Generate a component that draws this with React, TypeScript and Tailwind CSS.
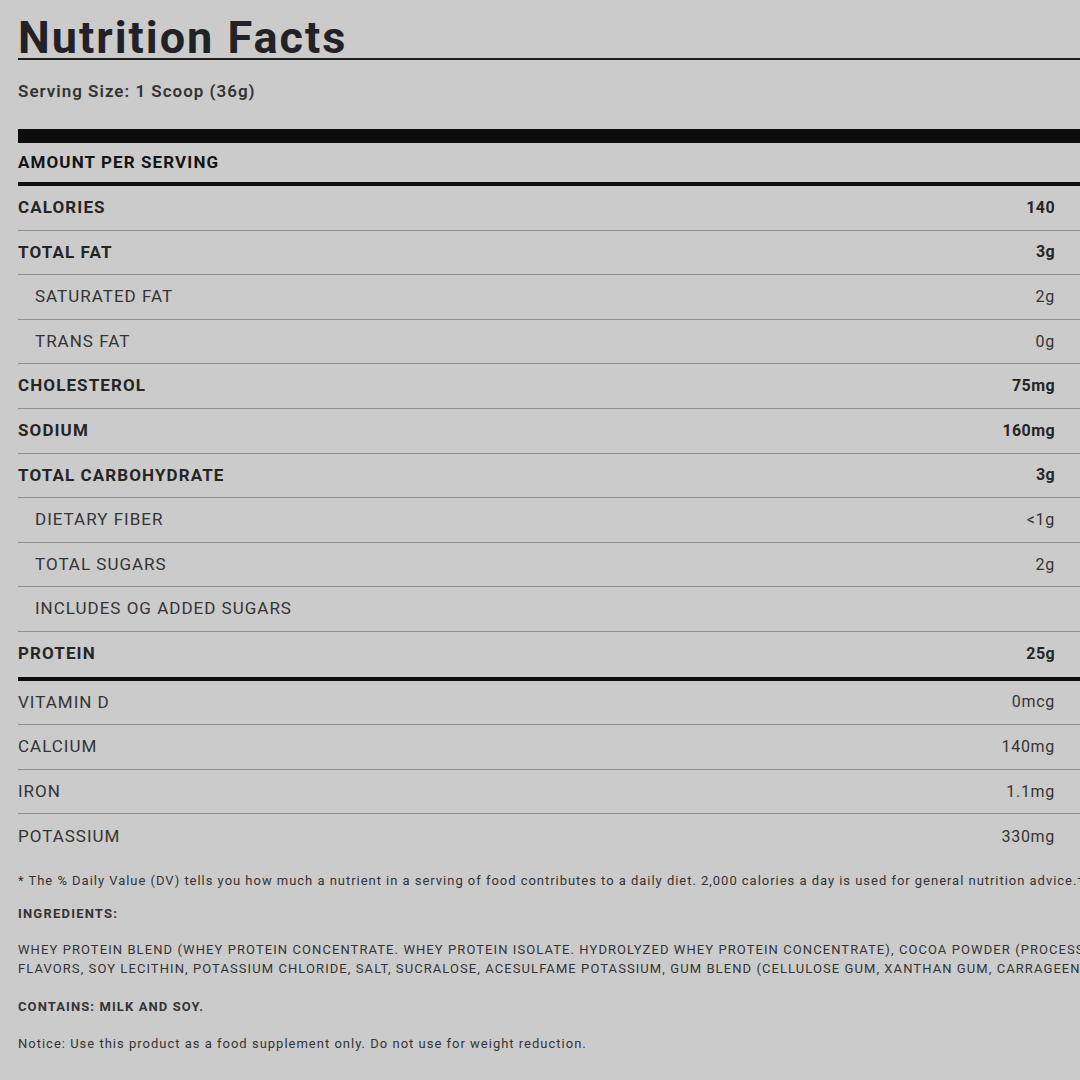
import React from "react";

type Row = { label: string; value: string; bold?: boolean; indent?: boolean };

const mainRows: Row[] = [
  { label: "CALORIES", value: "140", bold: true },
  { label: "TOTAL FAT", value: "3g", bold: true },
  { label: "SATURATED FAT", value: "2g", indent: true },
  { label: "TRANS FAT", value: "0g", indent: true },
  { label: "CHOLESTEROL", value: "75mg", bold: true },
  { label: "SODIUM", value: "160mg", bold: true },
  { label: "TOTAL CARBOHYDRATE", value: "3g", bold: true },
  { label: "DIETARY FIBER", value: "<1g", indent: true },
  { label: "TOTAL SUGARS", value: "2g", indent: true },
  { label: "INCLUDES OG ADDED SUGARS", value: "", indent: true },
  { label: "PROTEIN", value: "25g", bold: true },
];

const vitRows: Row[] = [
  { label: "VITAMIN D", value: "0mcg" },
  { label: "CALCIUM", value: "140mg" },
  { label: "IRON", value: "1.1mg" },
  { label: "POTASSIUM", value: "330mg" },
];

function NRow({ row, last }: { row: Row; last: boolean }) {
  return (
    <div
      className={
        "flex h-[44.6px] items-center justify-between pr-[25px] " +
        (last ? "" : "border-b border-[#8c9196] ")
      }
    >
      <span
        className={
          "text-[17px] " +
          (row.indent ? "pl-[17px] " : "") +
          (row.bold
            ? "font-bold text-[#252525] tracking-[1.1px]"
            : "font-normal text-[#343434] tracking-[1px]")
        }
      >
        {row.label}
      </span>
      <span
        className={
          "text-[16px] " +
          (row.bold
            ? "font-bold text-[#252525] tracking-[0.4px]"
            : "font-normal text-[#343434] tracking-[0.7px]")
        }
      >
        {row.value}
      </span>
    </div>
  );
}

export default function App() {
  return (
    <div
      className="w-[1080px] h-[1080px] overflow-hidden bg-[#cbcbcb] pl-[18px]"
      style={{ fontFamily: "Roboto, 'Liberation Sans', sans-serif" }}
    >
      <div className="w-[1062px]">
        <div className="h-[58px] pt-[17px]">
          <h1 className="text-[45px] leading-[42px] font-bold text-[#222226] tracking-[2px]">
            Nutrition Facts
          </h1>
        </div>
        <div className="h-[1.5px] bg-[#1e1e1e]" />
        <div className="flex h-[64px] items-center text-[17px] font-semibold text-[#333333] tracking-[1px]">
          Serving Size: 1 Scoop (36g)
        </div>
        <div className="mt-[5.5px] h-[14px] bg-[#0d0d0d]" />
        <div className="flex h-[39px] items-center text-[17px] font-bold text-[#141414] tracking-[1.1px]">
          AMOUNT PER SERVING
        </div>
        <div className="h-[4px] bg-[#0d0d0d]" />
        <div>
          {mainRows.map((r, i) => (
            <NRow key={r.label} row={r} last={i === mainRows.length - 1} />
          ))}
        </div>
        <div className="h-[4px] bg-[#0d0d0d]" />
        <div>
          {vitRows.map((r, i) => (
            <NRow key={r.label} row={r} last={i === vitRows.length - 1} />
          ))}
        </div>
        <div className="flex h-[44px] items-center whitespace-nowrap text-[13px] text-[#333333] tracking-[0.97px]">
          * The % Daily Value (DV) tells you how much a nutrient in a serving of food contributes to a daily diet. 2,000 calories a day is used for general nutrition advice.†
        </div>
        <div className="flex h-[22px] items-center text-[13px] font-bold text-[#333333] tracking-[1.2px]">
          INGREDIENTS:
        </div>
        <div className="mt-[15.5px] whitespace-nowrap text-[13px] leading-[19px] text-[#333333] tracking-[1.08px]">
          <div>
            WHEY PROTEIN BLEND (WHEY PROTEIN CONCENTRATE. WHEY PROTEIN ISOLATE. HYDROLYZED WHEY PROTEIN CONCENTRATE), COCOA POWDER (PROCESSED WITH ALKALI), NATURAL AND ARTIFICIAL
          </div>
          <div>
            FLAVORS, SOY LECITHIN, POTASSIUM CHLORIDE, SALT, SUCRALOSE, ACESULFAME POTASSIUM, GUM BLEND (CELLULOSE GUM, XANTHAN GUM, CARRAGEENAN).
          </div>
        </div>
        <div className="mt-[17px] flex h-[22px] items-center text-[13px] font-bold text-[#333333] tracking-[1.1px]">
          CONTAINS: MILK AND SOY.
        </div>
        <div className="mt-[16.5px] whitespace-nowrap text-[13px] leading-[19px] text-[#333333] tracking-[1px]">
          Notice: Use this product as a food supplement only. Do not use for weight reduction.
        </div>
      </div>
    </div>
  );
}
